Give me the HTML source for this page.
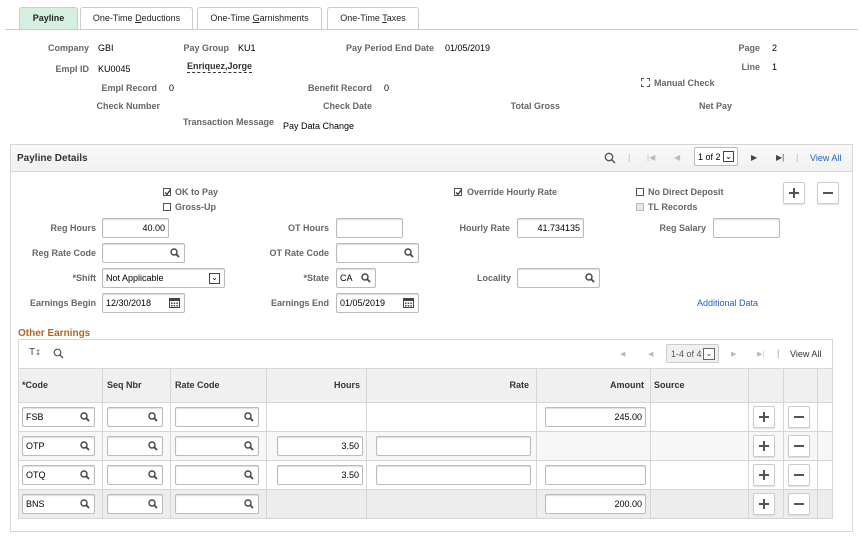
<!DOCTYPE html>
<html><head><meta charset="utf-8"><style>
*{margin:0;padding:0;box-sizing:border-box}
body{width:863px;height:541px;background:#fff;font-family:"Liberation Sans",Arial,sans-serif;font-size:9px;color:#000;position:relative;overflow:hidden}
.a{position:absolute;white-space:nowrap;line-height:11px}
.l{position:absolute;white-space:nowrap;line-height:11px;font-weight:bold;color:#666;text-align:right}
.tab{position:absolute;top:7px;height:22px;border:1px solid #ccc;border-bottom:none;border-radius:3px 3px 0 0;background:#fff;text-align:center;line-height:20px;font-size:9px;color:#222}
.in{position:absolute;height:20px;border:1px solid #bbb;border-radius:2px;background:#fff;box-shadow:inset 0 1px 1px #ddd;font-size:9px;line-height:18px;padding:0 3px}
.r{text-align:right}
.mg{position:absolute;right:4px;top:4px}
.cb{position:absolute;width:8px;height:8px;border:1px solid #555;background:#fff}
.btn{position:absolute;width:22px;height:22px;border:1px solid #ccc;border-radius:2px;background:#fff;box-shadow:0 1px 1px #ddd}
.btn b{position:absolute;background:#555}
.gv{position:absolute;background:#d6d6d6;width:1px}
.gh{position:absolute;background:#d6d6d6;height:1px}
</style></head><body>
<div class="tab" style="left:19px;width:59px;background:#d5efe0;border-color:#b9d9c6;font-weight:bold">Payline</div>
<div class="tab" style="left:80px;width:113px">One-Time <u>D</u>eductions</div>
<div class="tab" style="left:197px;width:125px">One-Time <u>G</u>arnishments</div>
<div class="tab" style="left:327px;width:92px">One-Time <u>T</u>axes</div>
<div style="position:absolute;left:5px;top:29px;width:853px;height:1px;background:#ccc"></div>

<div class="l" style="right:774px;top:43px">Company</div><div class="a" style="left:98px;top:43px">GBI</div>
<div class="l" style="right:634px;top:43px">Pay Group</div><div class="a" style="left:238px;top:43px">KU1</div>
<div class="l" style="right:429px;top:43px">Pay Period End Date</div><div class="a" style="left:445px;top:43px">01/05/2019</div>
<div class="l" style="right:103px;top:43px">Page</div><div class="a" style="left:772px;top:43px">2</div>
<div class="l" style="right:774px;top:64px">Empl ID</div><div class="a" style="left:98px;top:64px">KU0045</div>
<div class="a" style="left:187px;top:61px;font-weight:bold;color:#333;border-bottom:1px dashed #333;line-height:11px">Enriquez,Jorge</div>
<div class="l" style="right:103px;top:62px">Line</div><div class="a" style="left:772px;top:62px">1</div>
<div class="cb" style="left:641px;top:78px;border-style:dashed;width:9px;height:9px"></div>
<div class="l" style="left:654px;top:78px;text-align:left">Manual Check</div>
<div class="l" style="right:706px;top:83px">Empl Record</div><div class="a" style="left:169px;top:83px">0</div>
<div class="l" style="right:491px;top:83px">Benefit Record</div><div class="a" style="left:384px;top:83px">0</div>
<div class="l" style="right:703px;top:101px">Check Number</div>
<div class="l" style="right:491px;top:101px">Check Date</div>
<div class="l" style="right:303px;top:101px">Total Gross</div>
<div class="l" style="right:131px;top:101px">Net Pay</div>
<div class="l" style="right:589px;top:117px">Transaction Message</div>
<div class="a" style="left:283px;top:121px">Pay Data Change</div>

<div style="position:absolute;left:10px;top:144px;width:843px;height:388px;border:1px solid #d6d6d6"></div>
<div style="position:absolute;left:11px;top:145px;width:841px;height:27px;background:linear-gradient(#fafafa,#f0f0f0);border-bottom:1px solid #d6d6d6"></div>
<div class="a" style="left:17px;top:153px;font-weight:bold;font-size:10px;color:#333">Payline Details</div>
<svg class="a" style="left:604px;top:152px" width="12" height="12"><circle cx="5" cy="5" r="3.7" fill="none" stroke="#555" stroke-width="1.3"/><line x1="7.7" y1="7.7" x2="11" y2="11" stroke="#555" stroke-width="1.5"/></svg>
<div class="a" style="left:628px;top:152px;color:#bbb">|</div>
<div class="a" style="left:647px;top:152px;color:#bbb;font-size:8px">|◀</div>
<div class="a" style="left:674px;top:152px;color:#bbb;font-size:8px">◀</div>
<div style="position:absolute;left:694px;top:147px;width:44px;height:19px;border:1px solid #bbb;border-radius:2px;background:#fff"></div>
<div class="a" style="left:698px;top:152px">1 of 2</div>
<div style="position:absolute;left:723px;top:151px;width:11px;height:11px;border:1px solid #444;font-size:8px;line-height:9px;text-align:center">⌄</div>
<div class="a" style="left:751px;top:152px;color:#444;font-size:8px">▶</div>
<div class="a" style="left:776px;top:152px;color:#444;font-size:8px">▶|</div>
<div class="a" style="left:796px;top:152px;color:#bbb">|</div>
<div class="a" style="left:810px;top:153px;color:#1a62c7">View All</div>

<div class="cb" style="left:163px;top:188px"><svg style="position:absolute;left:0;top:0" width="7" height="7"><polyline points="1,3.5 3,5.5 6.5,0.5" fill="none" stroke="#333" stroke-width="1.3"/></svg></div>
<div class="l" style="left:175px;top:187px;text-align:left">OK to Pay</div>
<div class="cb" style="left:163px;top:203px"></div>
<div class="l" style="left:175px;top:202px;text-align:left">Gross-Up</div>
<div class="cb" style="left:454px;top:188px"><svg style="position:absolute;left:0;top:0" width="7" height="7"><polyline points="1,3.5 3,5.5 6.5,0.5" fill="none" stroke="#333" stroke-width="1.3"/></svg></div>
<div class="l" style="left:467px;top:187px;text-align:left">Override Hourly Rate</div>
<div class="cb" style="left:636px;top:188px"></div>
<div class="l" style="left:648px;top:187px;text-align:left">No Direct Deposit</div>
<div class="cb" style="left:636px;top:203px;border-color:#bbb;background:#e6e6e6"></div>
<div class="l" style="left:648px;top:202px;text-align:left">TL Records</div>
<div class="btn" style="left:783px;top:182px"><b style="left:5px;top:9px;width:10px;height:2px"></b><b style="left:9px;top:5px;width:2px;height:10px"></b></div>
<div class="btn" style="left:817px;top:182px"><b style="left:5px;top:9px;width:10px;height:2px"></b></div>

<div class="l" style="right:767px;top:223px">Reg Hours</div><div class="in r" style="left:102px;top:218px;width:67px">40.00</div>
<div class="l" style="right:534px;top:223px">OT Hours</div><div class="in" style="left:336px;top:218px;width:67px"></div>
<div class="l" style="right:353px;top:223px">Hourly Rate</div><div class="in r" style="left:517px;top:218px;width:67px">41.734135</div>
<div class="l" style="right:157px;top:223px">Reg Salary</div><div class="in" style="left:713px;top:218px;width:67px"></div>

<div class="l" style="right:767px;top:248px">Reg Rate Code</div><div class="in" style="left:102px;top:243px;width:83px"><svg class="mg" width="10" height="10"><circle cx="4" cy="4" r="3" fill="none" stroke="#444" stroke-width="1.4"/><line x1="6" y1="6" x2="9" y2="9" stroke="#444" stroke-width="1.8"/></svg></div>
<div class="l" style="right:534px;top:248px">OT Rate Code</div><div class="in" style="left:336px;top:243px;width:83px"><svg class="mg" width="10" height="10"><circle cx="4" cy="4" r="3" fill="none" stroke="#444" stroke-width="1.4"/><line x1="6" y1="6" x2="9" y2="9" stroke="#444" stroke-width="1.8"/></svg></div>

<div class="l" style="right:767px;top:273px">*Shift</div><div class="in" style="left:102px;top:268px;width:123px">Not Applicable<div style="position:absolute;right:4px;top:4px;width:11px;height:11px;border:1px solid #444;font-size:8px;line-height:8px;text-align:center">⌄</div></div>
<div class="l" style="right:534px;top:273px">*State</div><div class="in" style="left:336px;top:268px;width:40px">CA<svg class="mg" width="10" height="10"><circle cx="4" cy="4" r="3" fill="none" stroke="#444" stroke-width="1.4"/><line x1="6" y1="6" x2="9" y2="9" stroke="#444" stroke-width="1.8"/></svg></div>
<div class="l" style="right:352px;top:273px">Locality</div><div class="in" style="left:517px;top:268px;width:83px"><svg class="mg" width="10" height="10"><circle cx="4" cy="4" r="3" fill="none" stroke="#444" stroke-width="1.4"/><line x1="6" y1="6" x2="9" y2="9" stroke="#444" stroke-width="1.8"/></svg></div>

<div class="l" style="right:767px;top:298px">Earnings Begin</div><div class="in" style="left:102px;top:293px;width:83px">12/30/2018<svg class="mg" style="top:3px" width="11" height="11"><rect x="0.5" y="1.5" width="10" height="9" fill="none" stroke="#444"/><rect x="0.5" y="1.5" width="10" height="2.5" fill="#444"/><g fill="#444"><rect x="2" y="5.5" width="1.5" height="1.5"/><rect x="4.7" y="5.5" width="1.5" height="1.5"/><rect x="7.4" y="5.5" width="1.5" height="1.5"/><rect x="2" y="8" width="1.5" height="1.5"/><rect x="4.7" y="8" width="1.5" height="1.5"/><rect x="7.4" y="8" width="1.5" height="1.5"/></g></svg></div>
<div class="l" style="right:534px;top:298px">Earnings End</div><div class="in" style="left:336px;top:293px;width:83px">01/05/2019<svg class="mg" style="top:3px" width="11" height="11"><rect x="0.5" y="1.5" width="10" height="9" fill="none" stroke="#444"/><rect x="0.5" y="1.5" width="10" height="2.5" fill="#444"/><g fill="#444"><rect x="2" y="5.5" width="1.5" height="1.5"/><rect x="4.7" y="5.5" width="1.5" height="1.5"/><rect x="7.4" y="5.5" width="1.5" height="1.5"/><rect x="2" y="8" width="1.5" height="1.5"/><rect x="4.7" y="8" width="1.5" height="1.5"/><rect x="7.4" y="8" width="1.5" height="1.5"/></g></svg></div>
<div class="a" style="left:697px;top:298px;color:#1a62c7">Additional Data</div>

<div class="a" style="left:18px;top:328px;font-weight:bold;font-size:10px;color:#b5651d">Other Earnings</div>
<div style="position:absolute;left:18px;top:339px;width:815px;height:180px;border:1px solid #d6d6d6"></div>
<div class="a" style="left:29px;top:347px;font-size:10px;color:#444">T<span style="font-size:7px">↧</span></div>
<svg class="a" style="left:53px;top:348px" width="11" height="11"><circle cx="4.5" cy="4.5" r="3.3" fill="none" stroke="#555" stroke-width="1.2"/><line x1="7" y1="7" x2="10" y2="10" stroke="#555" stroke-width="1.4"/></svg>
<div class="a" style="left:620px;top:349px;color:#bbb;font-size:7px">◀</div>
<div class="a" style="left:648px;top:349px;color:#bbb;font-size:7px">◀</div>
<div style="position:absolute;left:666px;top:344px;width:53px;height:19px;border:1px solid #ccc;border-radius:2px;background:#f0f0f0"></div>
<div class="a" style="left:671px;top:349px;color:#555">1-4 of 4</div>
<div style="position:absolute;left:703px;top:348px;width:12px;height:12px;border:1px solid #666;background:#fff;font-size:8px;line-height:9px;text-align:center;color:#444">⌄</div>
<div class="a" style="left:731px;top:349px;color:#bbb;font-size:7px">▶</div>
<div class="a" style="left:757px;top:349px;color:#bbb;font-size:7px">▶|</div>
<div class="a" style="left:777px;top:348px;color:#999">|</div>
<div class="a" style="left:790px;top:349px;color:#333">View All</div>

<div style="position:absolute;left:19px;top:369px;width:813px;height:33px;background:#f0f0f0"></div>
<div style="position:absolute;left:19px;top:431px;width:813px;height:29px;background:#f7f7f7"></div>
<div style="position:absolute;left:19px;top:489px;width:813px;height:29px;background:#ededed"></div>
<div style="position:absolute;left:266px;top:402px;width:270px;height:29px;background:#fff"></div>
<div class="gh" style="left:19px;top:368px;width:813px"></div>
<div class="gh" style="left:19px;top:402px;width:813px"></div>
<div class="gh" style="left:19px;top:431px;width:813px"></div>
<div class="gh" style="left:19px;top:460px;width:813px"></div>
<div class="gh" style="left:19px;top:489px;width:813px"></div>
<div class="gv" style="left:102px;top:369px;height:149px"></div>
<div class="gv" style="left:170px;top:369px;height:149px"></div>
<div class="gv" style="left:266px;top:369px;height:149px"></div>
<div class="gv" style="left:366px;top:369px;height:149px"></div>
<div class="gv" style="left:536px;top:369px;height:149px"></div>
<div class="gv" style="left:650px;top:369px;height:149px"></div>
<div class="gv" style="left:748px;top:369px;height:149px"></div>
<div class="gv" style="left:783px;top:369px;height:149px"></div>
<div class="gv" style="left:817px;top:369px;height:149px"></div>

<div class="a" style="left:22px;top:380px;font-weight:bold;color:#333">*Code</div>
<div class="a" style="left:107px;top:380px;font-weight:bold;color:#333">Seq Nbr</div>
<div class="a" style="left:175px;top:380px;font-weight:bold;color:#333">Rate Code</div>
<div class="a" style="right:503px;top:380px;font-weight:bold;color:#333">Hours</div>
<div class="a" style="right:334px;top:380px;font-weight:bold;color:#333">Rate</div>
<div class="a" style="right:219px;top:380px;font-weight:bold;color:#333">Amount</div>
<div class="a" style="left:654px;top:380px;font-weight:bold;color:#333">Source</div>

<div class="in" style="left:22px;top:407px;width:73px">FSB<svg class="mg" width="10" height="10"><circle cx="4" cy="4" r="3" fill="none" stroke="#444" stroke-width="1.4"/><line x1="6" y1="6" x2="9" y2="9" stroke="#444" stroke-width="1.8"/></svg></div>
<div class="in" style="left:22px;top:436px;width:73px">OTP<svg class="mg" width="10" height="10"><circle cx="4" cy="4" r="3" fill="none" stroke="#444" stroke-width="1.4"/><line x1="6" y1="6" x2="9" y2="9" stroke="#444" stroke-width="1.8"/></svg></div>
<div class="in" style="left:22px;top:465px;width:73px">OTQ<svg class="mg" width="10" height="10"><circle cx="4" cy="4" r="3" fill="none" stroke="#444" stroke-width="1.4"/><line x1="6" y1="6" x2="9" y2="9" stroke="#444" stroke-width="1.8"/></svg></div>
<div class="in" style="left:22px;top:494px;width:73px">BNS<svg class="mg" width="10" height="10"><circle cx="4" cy="4" r="3" fill="none" stroke="#444" stroke-width="1.4"/><line x1="6" y1="6" x2="9" y2="9" stroke="#444" stroke-width="1.8"/></svg></div>

<div class="in" style="left:107px;top:407px;width:56px"><svg class="mg" width="10" height="10"><circle cx="4" cy="4" r="3" fill="none" stroke="#444" stroke-width="1.4"/><line x1="6" y1="6" x2="9" y2="9" stroke="#444" stroke-width="1.8"/></svg></div>
<div class="in" style="left:107px;top:436px;width:56px"><svg class="mg" width="10" height="10"><circle cx="4" cy="4" r="3" fill="none" stroke="#444" stroke-width="1.4"/><line x1="6" y1="6" x2="9" y2="9" stroke="#444" stroke-width="1.8"/></svg></div>
<div class="in" style="left:107px;top:465px;width:56px"><svg class="mg" width="10" height="10"><circle cx="4" cy="4" r="3" fill="none" stroke="#444" stroke-width="1.4"/><line x1="6" y1="6" x2="9" y2="9" stroke="#444" stroke-width="1.8"/></svg></div>
<div class="in" style="left:107px;top:494px;width:56px"><svg class="mg" width="10" height="10"><circle cx="4" cy="4" r="3" fill="none" stroke="#444" stroke-width="1.4"/><line x1="6" y1="6" x2="9" y2="9" stroke="#444" stroke-width="1.8"/></svg></div>

<div class="in" style="left:175px;top:407px;width:84px"><svg class="mg" width="10" height="10"><circle cx="4" cy="4" r="3" fill="none" stroke="#444" stroke-width="1.4"/><line x1="6" y1="6" x2="9" y2="9" stroke="#444" stroke-width="1.8"/></svg></div>
<div class="in" style="left:175px;top:436px;width:84px"><svg class="mg" width="10" height="10"><circle cx="4" cy="4" r="3" fill="none" stroke="#444" stroke-width="1.4"/><line x1="6" y1="6" x2="9" y2="9" stroke="#444" stroke-width="1.8"/></svg></div>
<div class="in" style="left:175px;top:465px;width:84px"><svg class="mg" width="10" height="10"><circle cx="4" cy="4" r="3" fill="none" stroke="#444" stroke-width="1.4"/><line x1="6" y1="6" x2="9" y2="9" stroke="#444" stroke-width="1.8"/></svg></div>
<div class="in" style="left:175px;top:494px;width:84px"><svg class="mg" width="10" height="10"><circle cx="4" cy="4" r="3" fill="none" stroke="#444" stroke-width="1.4"/><line x1="6" y1="6" x2="9" y2="9" stroke="#444" stroke-width="1.8"/></svg></div>

<div class="in r" style="left:277px;top:436px;width:86px">3.50</div>
<div class="in r" style="left:277px;top:465px;width:86px">3.50</div>
<div class="in" style="left:376px;top:436px;width:155px"></div>
<div class="in" style="left:376px;top:465px;width:155px"></div>
<div class="in r" style="left:545px;top:407px;width:101px">245.00</div>
<div class="in" style="left:545px;top:465px;width:101px"></div>
<div class="in r" style="left:545px;top:494px;width:101px">200.00</div>

<div class="btn" style="left:753px;top:406px"><b style="left:5px;top:9px;width:10px;height:2px"></b><b style="left:9px;top:5px;width:2px;height:10px"></b></div>
<div class="btn" style="left:788px;top:406px"><b style="left:5px;top:9px;width:10px;height:2px"></b></div>
<div class="btn" style="left:753px;top:435px"><b style="left:5px;top:9px;width:10px;height:2px"></b><b style="left:9px;top:5px;width:2px;height:10px"></b></div>
<div class="btn" style="left:788px;top:435px"><b style="left:5px;top:9px;width:10px;height:2px"></b></div>
<div class="btn" style="left:753px;top:464px"><b style="left:5px;top:9px;width:10px;height:2px"></b><b style="left:9px;top:5px;width:2px;height:10px"></b></div>
<div class="btn" style="left:788px;top:464px"><b style="left:5px;top:9px;width:10px;height:2px"></b></div>
<div class="btn" style="left:753px;top:493px"><b style="left:5px;top:9px;width:10px;height:2px"></b><b style="left:9px;top:5px;width:2px;height:10px"></b></div>
<div class="btn" style="left:788px;top:493px"><b style="left:5px;top:9px;width:10px;height:2px"></b></div>
</body></html>
